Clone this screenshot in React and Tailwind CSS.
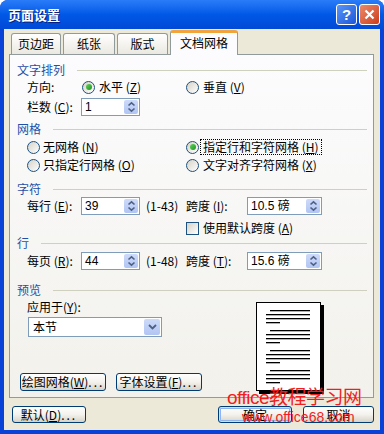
import React from 'react';

const Acc = ({ k }) => (
  <span>
    (<span className="underline underline-offset-[1px]">{k}</span>)
  </span>
);

const Radio = ({ checked }) => (
  <span className="w-[13px] h-[13px] shrink-0 rounded-full border border-[#1c5180] bg-gradient-to-br from-[#d6d2c6] to-white flex items-center justify-center">
    {checked && <span className="w-[6px] h-[6px] rounded-full bg-gradient-to-br from-[#5fd45f] to-[#1a931a]" />}
  </span>
);

const Check = () => (
  <span className="w-[13px] h-[13px] shrink-0 border border-[#1c5180] bg-gradient-to-br from-[#d6d2c6] to-white" />
);

const SpinBtn = () => (
  <span className="ml-auto mr-[1px] w-[14px] h-[14px] rounded-[2px] bg-gradient-to-b from-[#cddaf9] to-[#b1c5f3] flex items-center justify-center">
    <svg width="9" height="12" viewBox="0 0 9 12">
      <polyline points="1.5,4.5 4.5,1.8 7.5,4.5" fill="none" stroke="#4d6185" strokeWidth="1.6" />
      <polyline points="1.5,7.5 4.5,10.2 7.5,7.5" fill="none" stroke="#4d6185" strokeWidth="1.6" />
    </svg>
  </span>
);

const Spin = ({ value, className }) => (
  <div className={`h-[18px] border border-[#7f9db9] bg-white flex items-center ${className}`}>
    <span className="pl-[3px] font-['Liberation_Sans','Noto_Sans_CJK_SC',sans-serif] text-[12px] leading-none">{value}</span>
    <SpinBtn />
  </div>
);

const Header = ({ children }) => (
  <div className="h-[14px] flex items-center pl-[7px] pr-[6px]">
    <span className="text-[#1f50a8] leading-none">{children}</span>
    <span className="flex-1 ml-[12px] h-px bg-[#d0d0bf]" />
  </div>
);

const Btn = ({ children, className = '', def }) => (
  <div
    className={`flex items-center justify-center rounded-[3px] border border-[#003c74] bg-gradient-to-b from-white via-[#f3f2ec] to-[#d8d3c7] leading-none ${
      def ? 'shadow-[inset_0_0_0_1px_#cee0fb,inset_0_0_0_2px_#8fb3ee]' : ''
    } ${className}`}
  >
    {children}
  </div>
);

const Dots = () => <span className="tracking-[2px]">...</span>;

const Tab = ({ children, w, active }) =>
  active ? (
    <div className={`relative top-px z-10 h-[25px] ${w} rounded-t-[3px] border-x border-[#919b9c] border-t-[3px] border-t-[#f2a43c] bg-[#fcfcfe] flex items-center justify-center pb-[2px]`}>
      {children}
    </div>
  ) : (
    <div className={`h-[21px] ${w} rounded-t-[3px] border border-b-0 border-[#919b9c] bg-gradient-to-b from-white to-[#eae8e0] flex items-center justify-center`}>
      {children}
    </div>
  );

const Page = () => {
  const groups = [7, 27, 47, 67];
  return (
    <div className="mt-[5px] w-[65px] h-[89px] border border-black bg-white shadow-[3px_3px_0_0_#000]">
      <svg width="63" height="87" viewBox="0 0 63 87">
        {groups.map((y) => (
          <g key={y} fill="#000">
            <rect x="13" y={y} width="40" height="1.3" />
            <rect x="9" y={y + 4} width="44" height="1.3" />
            <rect x="9" y={y + 8} width="44" height="1.3" />
            <rect x="9" y={y + 12} width="14" height="1.3" />
          </g>
        ))}
      </svg>
    </div>
  );
};

export default function App() {
  return (
    <div className="relative w-[384px] h-[434px] flex flex-col rounded-t-[8px] bg-[#0842d6] font-['Noto_Sans_CJK_SC',sans-serif] text-[12px] text-black">
      {/* title bar */}
      <div className="h-[29px] shrink-0 rounded-t-[8px] bg-gradient-to-b from-[#2a7cf8] via-[#0058e6] to-[#004ad6] flex items-center pl-[8px] pr-[4px]">
        <span className="text-white font-bold text-[13px] leading-none [text-shadow:1px_1px_0_#0a1e7a]">页面设置</span>
        <div className="ml-auto flex gap-[2px]">
          <div className="w-[21px] h-[21px] rounded-[3px] border border-white bg-gradient-to-br from-[#5a95f8] to-[#1d55d8] flex items-center justify-center text-white font-bold text-[15px] leading-none font-['Liberation_Sans',sans-serif]">
            ?
          </div>
          <div className="w-[21px] h-[21px] rounded-[3px] border border-white bg-gradient-to-br from-[#ea8a6a] to-[#cc3a14] flex items-center justify-center">
            <svg width="11" height="11" viewBox="0 0 11 11">
              <path d="M1.5 1.5 L9.5 9.5 M9.5 1.5 L1.5 9.5" stroke="#fff" strokeWidth="2.2" />
            </svg>
          </div>
        </div>
      </div>

      {/* body */}
      <div className="flex-1 flex flex-col bg-[#ece9d8] ml-[4px] mr-[4px] mb-[4px] pl-[5px] pr-[6px]">
        {/* tabs */}
        <div className="h-[25px] flex items-end pl-[2px] gap-[2px]">
          <Tab w="w-[50px]">页边距</Tab>
          <Tab w="w-[52px]">纸张</Tab>
          <Tab w="w-[51px]">版式</Tab>
          <Tab w="w-[68px]" active>文档网格</Tab>
        </div>

        {/* panel */}
        <div className="h-[344px] border border-[#919b9c] bg-gradient-to-b from-[#fcfcfe] to-[#f2f1eb] flex flex-col">
          <div className="mt-[8px]">
            <Header>文字排列</Header>
          </div>
          <div className="mt-[1px] h-[18px] flex items-center pl-[17px]">
            <span className="w-[55px]">方向:</span>
            <div className="w-[104px] flex items-center gap-[4px]">
              <Radio checked />
              <span>水平 <Acc k="Z" /></span>
            </div>
            <Radio />
            <span className="ml-[4px]">垂直 <Acc k="V" /></span>
          </div>
          <div className="mt-[2px] h-[18px] flex items-center pl-[17px]">
            <span className="w-[54px]">栏数 <Acc k="C" />:</span>
            <Spin value="1" className="w-[59px]" />
          </div>

          <div className="mt-[6px]">
            <Header>网格</Header>
          </div>
          <div className="mt-[2px] h-[18px] flex items-center pl-[17px]">
            <div className="w-[159px] flex items-center gap-[3px]">
              <Radio />
              <span>无网格 <Acc k="N" /></span>
            </div>
            <Radio checked />
            <span className="ml-[1px] px-[2px] border border-dotted border-black leading-[14px]">
              指定行和字符网格 <Acc k="H" />
            </span>
          </div>
          <div className="h-[18px] flex items-center pl-[17px]">
            <div className="w-[159px] flex items-center gap-[3px]">
              <Radio />
              <span>只指定行网格 <Acc k="O" /></span>
            </div>
            <Radio />
            <span className="ml-[4px]">文字对齐字符网格 <Acc k="X" /></span>
          </div>

          <div className="mt-[8px]">
            <Header>字符</Header>
          </div>
          <div className="mt-[1px] h-[18px] flex items-center pl-[17px]">
            <span className="w-[54px]">每行 <Acc k="E" />:</span>
            <Spin value="39" className="w-[59px]" />
            <span className="ml-[6px] w-[40px]">(1-43)</span>
            <span className="w-[61px]">跨度 <Acc k="I" />:</span>
            <Spin value="10.5 磅" className="w-[75px]" />
          </div>
          <div className="mt-[5px] h-[16px] flex items-center pl-[176px] gap-[4px]">
            <Check />
            <span>使用默认跨度 <Acc k="A" /></span>
          </div>
          <Header>行</Header>
          <div className="mt-[2px] h-[18px] flex items-center pl-[17px]">
            <span className="w-[54px]">每页 <Acc k="R" />:</span>
            <Spin value="44" className="w-[59px]" />
            <span className="ml-[6px] w-[40px]">(1-48)</span>
            <span className="w-[61px]">跨度 <Acc k="T" />:</span>
            <Spin value="15.6 磅" className="w-[75px]" />
          </div>

          <div className="mt-[13px]">
            <Header>预览</Header>
          </div>
          <div className="h-[94px] flex pl-[10px]">
            <div className="w-[236px] flex flex-col">
              <span className="mt-[1px] h-[18px] flex items-center ml-[7px]">
                应用于 <Acc k="Y" />:
              </span>
              <div className="mt-[1px] ml-[8px] w-[134px] h-[20px] border border-[#7f9db9] bg-white flex items-center">
                <span className="pl-[4px]">本节</span>
                <span className="ml-auto mr-px w-[16px] h-[16px] rounded-[2px] bg-gradient-to-b from-[#cddaf9] to-[#b1c5f3] flex items-center justify-center">
                  <svg width="9" height="6" viewBox="0 0 9 6">
                    <polyline points="1,1 4.5,4.5 8,1" fill="none" stroke="#4d6185" strokeWidth="1.8" />
                  </svg>
                </span>
              </div>
              <div className="mt-auto h-[18px] flex gap-[10px]">
                <Btn className="w-[86px]">
                  绘图网格 <Acc k="W" />
                  <Dots />
                </Btn>
                <Btn className="w-[86px]">
                  字体设置 <Acc k="F" />
                  <Dots />
                </Btn>
              </div>
            </div>
            <Page />
          </div>
        </div>

        {/* bottom buttons */}
        <div className="mt-[8px] h-[17px] flex pl-[3px]">
          <Btn className="w-[74px]">
            默认 <Acc k="D" />
            <Dots />
          </Btn>
          <Btn def className="ml-auto w-[74px]">
            确定
          </Btn>
          <Btn className="ml-[11px] w-[71px]">取消</Btn>
        </div>
      </div>

      {/* watermark */}
      <div className="absolute left-[227px] top-[388px] text-[19px] leading-none tracking-[-0.5px] text-[#f01e1e] font-['Liberation_Sans','Noto_Sans_CJK_SC',sans-serif]">
        office教程学习网
      </div>
      <div className="absolute left-[242px] top-[410px] text-[14px] leading-none text-[#f01e1e] font-['Liberation_Sans',sans-serif]">
        www.office68.com
      </div>
    </div>
  );
}
